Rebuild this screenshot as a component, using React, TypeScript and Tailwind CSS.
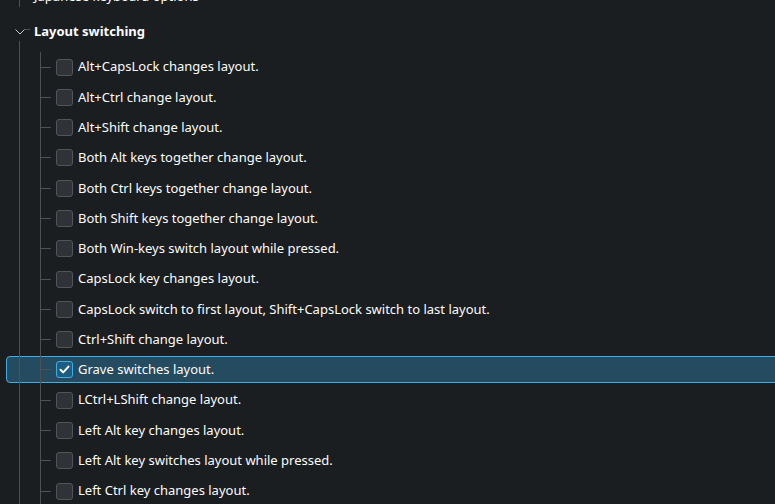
import React from "react";

const items: { label: string; checked?: boolean }[] = [
  { label: "Alt+CapsLock changes layout." },
  { label: "Alt+Ctrl change layout." },
  { label: "Alt+Shift change layout." },
  { label: "Both Alt keys together change layout." },
  { label: "Both Ctrl keys together change layout." },
  { label: "Both Shift keys together change layout." },
  { label: "Both Win-keys switch layout while pressed." },
  { label: "CapsLock key changes layout." },
  { label: "CapsLock switch to first layout, Shift+CapsLock switch to last layout." },
  { label: "Ctrl+Shift change layout." },
  { label: "Grave switches layout.", checked: true },
  { label: "LCtrl+LShift change layout." },
  { label: "Left Alt key changes layout." },
  { label: "Left Alt key switches layout while pressed." },
  { label: "Left Ctrl key changes layout." },
  { label: "Left Ctrl key switches layout while pressed." },
];

function Row({ label, checked }: { label: string; checked?: boolean }) {
  return (
    <div className="relative h-[30.29px] flex items-stretch">
      {checked && (
        <div className="absolute left-[6px] right-[-10px] top-[1.5px] bottom-[2px] rounded-[4px] border border-[#3daee9] bg-[#244b60]" />
      )}
      <div className="w-[19px] shrink-0" />
      <div className="relative w-px shrink-0 bg-[#4b5157]" />
      <div className="w-[20px] shrink-0" />
      <div className="relative w-px shrink-0 bg-[#4b5157]" />
      <div className="relative w-[10px] shrink-0 flex items-center">
        <div className="h-px w-full bg-[#4b5157]" />
      </div>
      <div className="relative ml-[5px] flex items-center gap-[5px]">
        {checked ? (
          <div className="w-[17px] h-[17px] rounded-[3px] border border-[#3daee9] bg-[#1f5d80] flex items-center justify-center">
            <svg width="13" height="13" viewBox="0 0 13 13">
              <path d="M2.5 6.8 L5.2 9.4 L10.5 3.6" fill="none" stroke="#ffffff" strokeWidth="2" strokeLinecap="round" strokeLinejoin="round" />
            </svg>
          </div>
        ) : (
          <div className="w-[17px] h-[17px] rounded-[3px] border border-[#4f555b] bg-[#2f3338]" />
        )}
        <span className="text-[13px] text-[#fcfcfc] whitespace-nowrap">{label}</span>
      </div>
    </div>
  );
}

export default function App() {
  return (
    <div
      className="w-[775px] h-[504px] overflow-hidden bg-[#1b1e20] text-[#fcfcfc]"
      style={{ fontFamily: '"Noto Sans", "DejaVu Sans", sans-serif' }}
    >
      <div className="mt-[-20px] flex flex-col">
        <div className="h-[33px] flex items-stretch">
          <div className="w-[19px] shrink-0" />
          <div className="flex flex-col w-px shrink-0">
            <div className="h-[27px] bg-[#4b5157]" />
          </div>
          <div className="ml-[14px] flex items-center">
            <span className="text-[13px] whitespace-nowrap">Japanese keyboard options</span>
          </div>
        </div>
        <div className="h-[39px] pb-[2px] flex items-stretch">
          <div className="w-[14px] shrink-0" />
          <div className="relative w-[20px] shrink-0 flex flex-col">
            <svg className="mt-[14px] shrink-0" width="20" height="10" viewBox="0 0 20 10">
              <path d="M1.5 2.5 L6 7 L10.5 2.5" fill="none" stroke="#c8cacc" strokeWidth="1" />
              <path d="M11 2.5 L16 2.5" fill="none" stroke="#4b5157" strokeWidth="1" />
            </svg>
            <div className="ml-[5px] mt-[4px] w-px flex-1 bg-[#4b5157] -mb-[2px]" />
          </div>
          <div className="flex items-center">
            <span className="text-[13px] font-bold whitespace-nowrap">Layout switching</span>
          </div>
        </div>
        {items.map((it) => (
          <Row key={it.label} label={it.label} checked={it.checked} />
        ))}
      </div>
    </div>
  );
}
